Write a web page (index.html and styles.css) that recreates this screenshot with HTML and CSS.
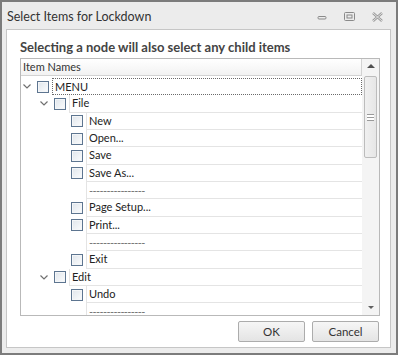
FILE: index.html
```html
<!DOCTYPE html>
<html lang="en">
<head>
    <meta charset="UTF-8">
    <title>Select Items for Lockdown</title>
    <link rel="stylesheet" href="styles.css">
</head>
<body>
    <div class="window">
        <div class="titlebar">
            <span class="title">Select Items for Lockdown</span>
            <div class="win-buttons">
                <svg width="10" height="10" viewBox="0 0 10 10"><rect x="1" y="4.5" width="8" height="2.5" rx="1" fill="none" stroke="#8a8a8a"/></svg>
                <svg width="11" height="10" viewBox="0 0 11 10"><rect x="0.5" y="0.5" width="10" height="8" rx="1" fill="none" stroke="#8a8a8a"/><rect x="3" y="3" width="5" height="3" fill="none" stroke="#8a8a8a"/></svg>
                <svg width="11" height="10" viewBox="0 0 11 10"><path d="M1 1 L10 9 M10 1 L1 9" stroke="#9a9a9a" stroke-width="2.4" fill="none"/><path d="M1 1 L10 9 M10 1 L1 9" stroke="#f3f3f3" stroke-width="0.8" fill="none"/></svg>
            </div>
        </div>

        <div class="panel">
            <h1>Selecting a node will also select any child items</h1>

            <div class="tree">
                <div class="tree-main">
                    <div class="tree-header">Item Names</div>
                    <div class="tree-body">
                        <div class="row lvl0"><span class="chev"><svg width="8" height="5" viewBox="0 0 8 5"><path d="M0.5 0.5 L4 4 L7.5 0.5" fill="none" stroke="#707070" stroke-width="1.2"/></svg></span><span class="check"></span><span class="cell focus">MENU</span></div>
                        <div class="row lvl1"><span class="chev"><svg width="8" height="5" viewBox="0 0 8 5"><path d="M0.5 0.5 L4 4 L7.5 0.5" fill="none" stroke="#707070" stroke-width="1.2"/></svg></span><span class="check"></span><span class="cell">File</span></div>
                        <div class="row lvl2"><span class="chev"></span><span class="check"></span><span class="cell">New</span></div>
                        <div class="row lvl2"><span class="chev"></span><span class="check"></span><span class="cell">Open...</span></div>
                        <div class="row lvl2"><span class="chev"></span><span class="check"></span><span class="cell">Save</span></div>
                        <div class="row lvl2"><span class="chev"></span><span class="check"></span><span class="cell">Save As...</span></div>
                        <div class="row lvl2"><span class="chev"></span><span class="nocheck"></span><span class="cell sep">----------------</span></div>
                        <div class="row lvl2"><span class="chev"></span><span class="check"></span><span class="cell">Page Setup...</span></div>
                        <div class="row lvl2"><span class="chev"></span><span class="check"></span><span class="cell">Print...</span></div>
                        <div class="row lvl2"><span class="chev"></span><span class="nocheck"></span><span class="cell sep">----------------</span></div>
                        <div class="row lvl2"><span class="chev"></span><span class="check"></span><span class="cell">Exit</span></div>
                        <div class="row lvl1"><span class="chev"><svg width="8" height="5" viewBox="0 0 8 5"><path d="M0.5 0.5 L4 4 L7.5 0.5" fill="none" stroke="#707070" stroke-width="1.2"/></svg></span><span class="check"></span><span class="cell">Edit</span></div>
                        <div class="row lvl2"><span class="chev"></span><span class="check"></span><span class="cell">Undo</span></div>
                        <div class="row lvl2"><span class="chev"></span><span class="nocheck"></span><span class="cell sep">----------------</span></div>
                    </div>
                </div>
                <div class="scrollbar">
                    <div class="arrow up"></div>
                    <div class="track">
                        <div class="thumb"><span class="grip"></span></div>
                    </div>
                    <div class="arrow down"></div>
                </div>
            </div>

            <div class="buttons">
                <button type="button">OK</button>
                <button type="button">Cancel</button>
            </div>
        </div>
    </div>
</body>
</html>
```

FILE: styles.css
```css
body {
    margin: 0;
    font-family: Lato, "Noto Sans", sans-serif;
    font-size: 11px;
    color: #222;
    background-color: #ffffff;
}
.window {
    width: 398px;
    height: 355px;
    box-sizing: border-box;
    border: 2px solid #7c7c7c;
    background-color: #ececec;
    display: flex;
    flex-direction: column;
}
.titlebar {
    height: 27px;
    flex-shrink: 0;
    display: flex;
    align-items: center;
    justify-content: space-between;
    padding: 0 13px 0 5px;
}
.title {
    font-size: 12.5px;
    color: #333;
    margin-top: 2px;
}
.win-buttons {
    display: flex;
    gap: 17px;
    align-items: center;
    margin-top: 3px;
}
.panel {
    flex: 1;
    margin: 0 5px 5px 4px;
    background-color: #ffffff;
    border: 1px solid #c6c6c6;
    padding: 8px 10px 5px 13px;
    display: flex;
    flex-direction: column;
    min-height: 0;
}
h1 {
    margin: 0 0 2px 0;
    height: 18px;
    flex-shrink: 0;
    line-height: 18px;
    font-size: 13px;
    font-weight: bold;
    color: #444;
}
.tree {
    flex: 1;
    border: 1px solid #b9b9b9;
    display: flex;
    min-height: 0;
}
.tree-main {
    flex: 1;
    display: flex;
    flex-direction: column;
    min-width: 0;
}
.tree-header {
    height: 16px;
    line-height: 16px;
    flex-shrink: 0;
    padding-left: 2px;
    background: linear-gradient(#ffffff, #f2f2f2);
    border-bottom: 1px solid #d2d2d2;
    border-right: 1px solid #d2d2d2;
    color: #333;
}
.tree-body {
    flex: 1;
    overflow: hidden;
    padding-top: 2px;
}
.row {
    height: 17.33px;
    display: flex;
    align-items: stretch;
}
.lvl1 { padding-left: 17px; }
.lvl2 { padding-left: 34px; }
.chev {
    width: 16px;
    display: flex;
    align-items: center;
    justify-content: center;
    margin-left: -2px;
    margin-right: 2px;
}
.check, .nocheck {
    width: 12px;
    height: 12px;
    align-self: center;
    box-sizing: border-box;
    margin-right: 3px;
}
.check {
    border: 1px solid #5d7590;
    background: linear-gradient(135deg, #dfe5eb, #fbfcfd);
    box-shadow: inset 0 0 0 1px #f4f6f8;
}
.cell {
    flex: 1;
    padding-left: 2px;
    line-height: 16px;
    border-left: 1px solid #e4e4e4;
    border-bottom: 1px solid #e4e4e4;
    white-space: nowrap;
}
.cell.focus {
    border: 1px dotted #6a6a6a;
    line-height: 15px;
}
.cell.sep {
    color: #6f6f6f;
    font-size: 11px;
    letter-spacing: -0.6px;
    line-height: 17px;
}
.scrollbar {
    width: 17px;
    background-color: #f4f4f4;
    display: flex;
    flex-direction: column;
    align-items: center;
}
.arrow {
    height: 15px;
    width: 17px;
    position: relative;
    flex-shrink: 0;
}
.arrow.up::after, .arrow.down::after {
    content: "";
    position: absolute;
    border-left: 4px solid transparent;
    border-right: 4px solid transparent;
}
.arrow.up::after {
    top: 5px;
    left: 5px;
    border-bottom: 4px solid #505050;
}
.arrow.down::after {
    top: 6px;
    left: 6px;
    border-top: 3px solid #606060;
    border-left-width: 3px;
    border-right-width: 3px;
}
.track {
    flex: 1;
    width: 17px;
    padding-top: 2px;
}
.thumb {
    width: 13px;
    height: 82px;
    margin-left: 2px;
    box-sizing: border-box;
    border: 1px solid #bcbcbc;
    border-radius: 2px;
    background: linear-gradient(90deg, #f0f0f0, #e6e6e6);
    display: flex;
    align-items: center;
    justify-content: center;
}
.grip {
    width: 7px;
    height: 7px;
    box-sizing: border-box;
    border-top: 1px solid #9a9a9a;
    border-bottom: 1px solid #9a9a9a;
    background: linear-gradient(#ffffff 40%, #9a9a9a 40%, #9a9a9a 60%, #ffffff 60%);
}
.buttons {
    display: flex;
    flex-shrink: 0;
    justify-content: flex-end;
    gap: 7px;
    margin-top: 5px;
    padding-right: 1px;
}
button {
    width: 67px;
    height: 21px;
    border: 1px solid #acacac;
    border-radius: 2px;
    background: linear-gradient(#f6f6f6, #e4e4e4);
    font-family: Lato, "Noto Sans", sans-serif;
    font-size: 11.5px;
    color: #333;
    padding: 0;
}
```
